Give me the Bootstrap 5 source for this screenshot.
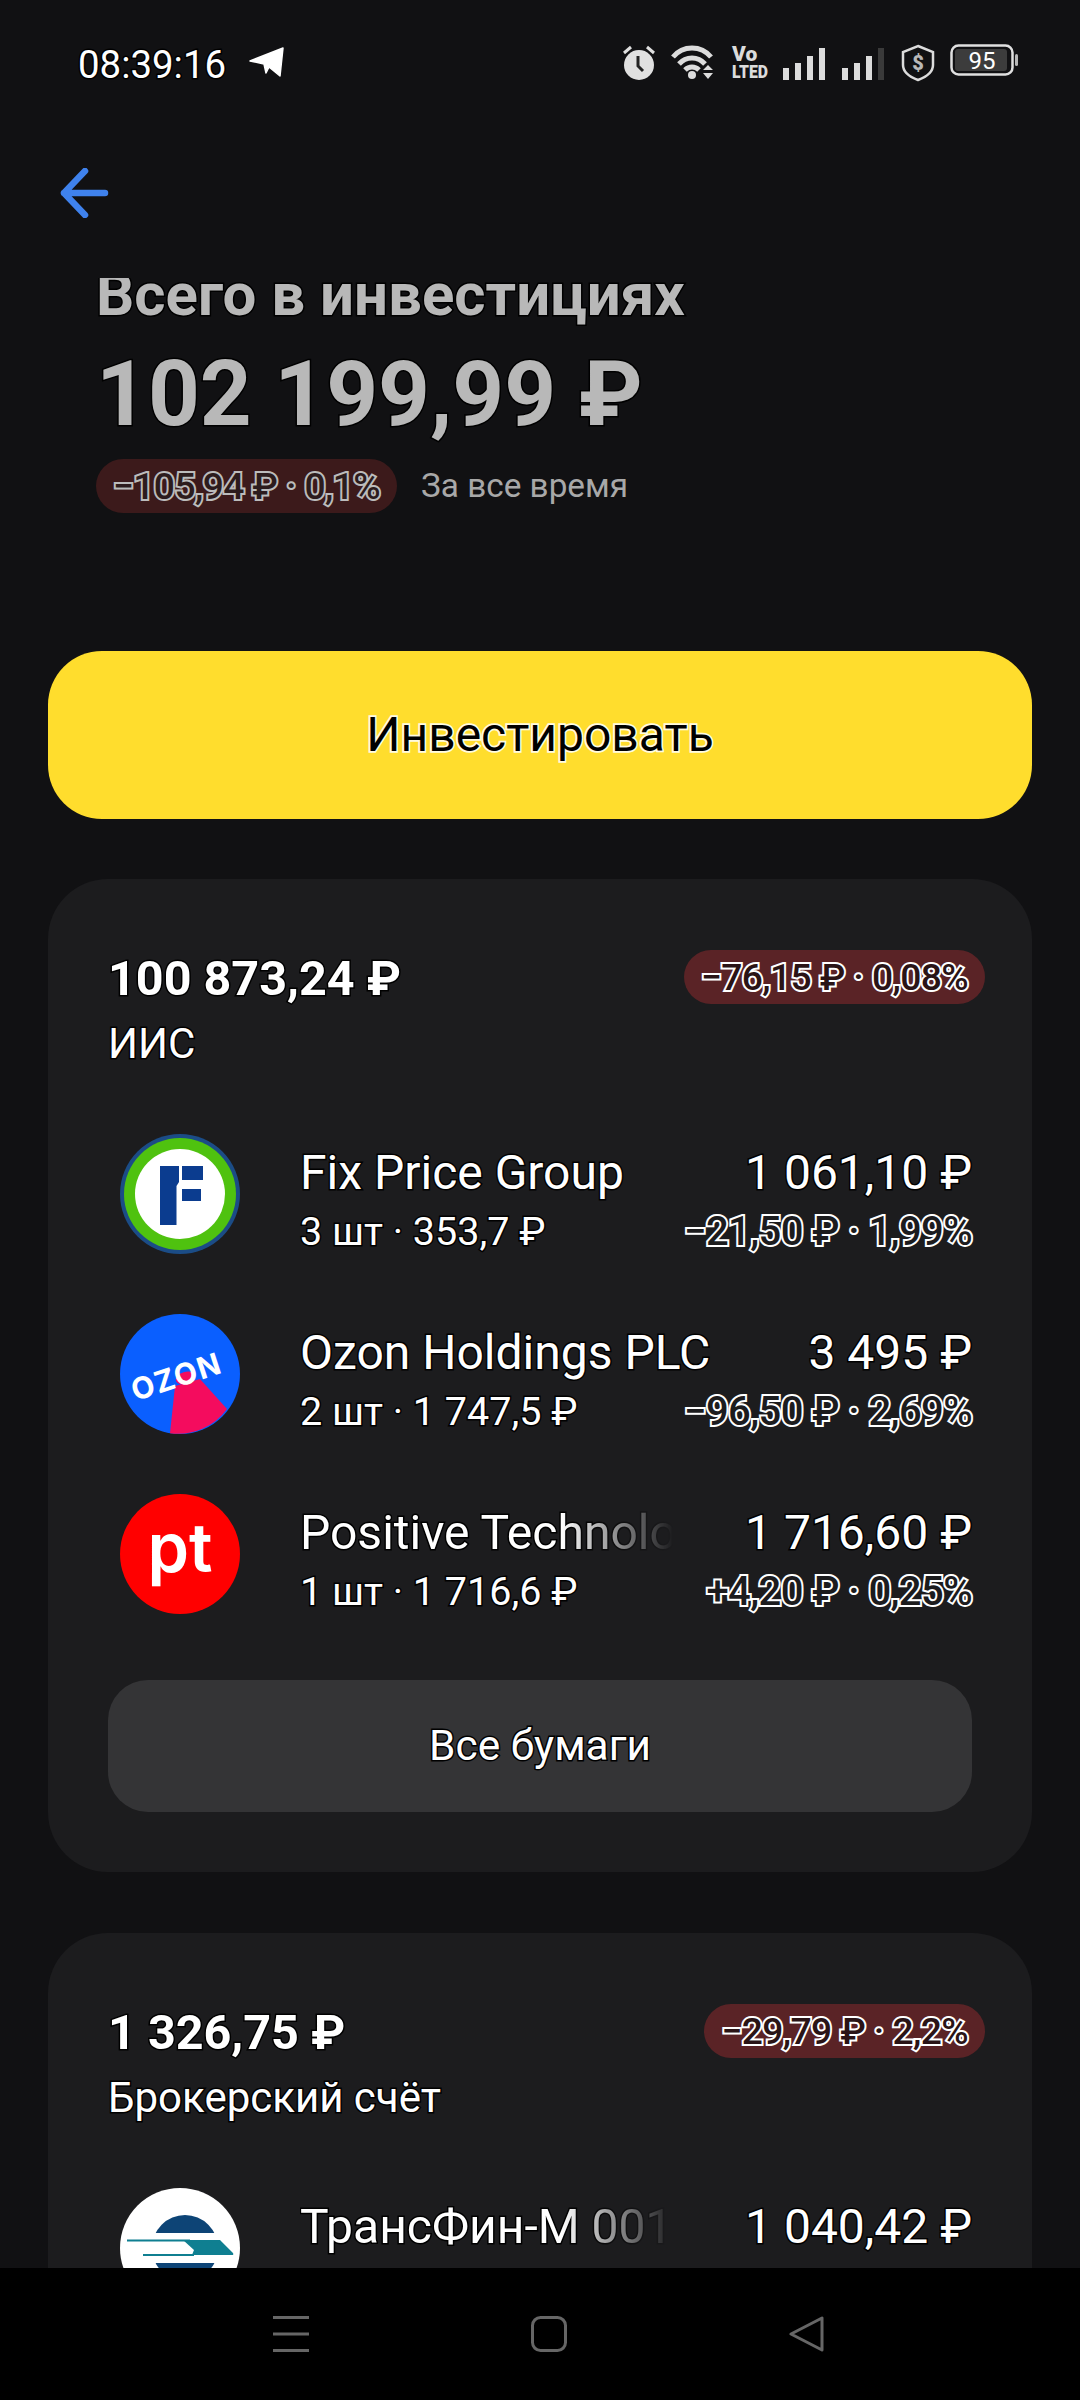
<!DOCTYPE html>
<html lang="ru">
<head>
    <meta charset="UTF-8">
    <meta name="viewport" content="width=device-width, initial-scale=1.0">
    <title>Всего в инвестициях</title>
    <link rel="stylesheet" href="https://cdn.jsdelivr.net/npm/bootstrap@5.3.0/dist/css/bootstrap.min.css">
    <style>
        body { background: #111113; font-family: Roboto, "Liberation Sans", sans-serif; color: #fff; }
        .screen { width: 1080px; height: 2400px; overflow: hidden; }
        .scroll-area { height: 2268px; overflow: hidden; }
        .halo { -webkit-text-stroke: 3px #000; paint-order: stroke fill; }
        .status-row { height: 128px; padding: 43px 62px 0 78px; }
        .status-time { font-size: 38.4px; line-height: 44px; margin-right: 23px; color: #fff; }
        .status-icons { gap: 15px; padding-top: 1px; }
        .status-icons svg { overflow: visible; }
        .back-row { height: 100px; padding: 40px 0 0 58px; }
        .summary { padding: 50px 0 0 96px; height: 423px; }
        .summary-title { font-size: 60px; line-height: 33px; height: 56px; overflow: hidden; font-weight: 700; color: #b8b8b8; margin: 0; white-space: nowrap; }
        .summary-total { font-size: 90.500px; line-height: 104px; font-weight: 700; color: #b8b8b8; margin: 8px 0 13px 0; }
        .summary-note { font-size: 33.300px; color: #a8a8a8; margin-left: 24px; }
        .money-pill { height: 54px; border-radius: 27px; background: #5a2326; padding: 0 17px; font-size: 37.200px; font-weight: 500; line-height: 54px; white-space: nowrap; color: #2a1416; -webkit-text-stroke: 4px #fff; paint-order: stroke fill; letter-spacing: -.6px; }
        .money-pill.dim { background: #3c1a1b; color: #2c1c1d; -webkit-text-stroke-color: #bcbcbc; }
        .invest-btn { display: block; width: 984px; height: 168px; margin: 0 0 60px 48px; border: 0; border-radius: 54px; background: #ffdd2d; font-size: 48px; color: #000; -webkit-text-stroke: 3.5px #fffbe0; paint-order: stroke fill; }
        .invest-btn:hover { background: #ffdd2d; color: #000; }
        .account-box { width: 984px; margin: 0 0 61px 48px; padding: 73px 60px 60px 60px; border: 0; border-radius: 60px; background: #1c1c1e; color: #fff; }
        .account-sum { font-size: 48.500px; line-height: 54px; font-weight: 700; white-space: nowrap; }
        .account-name { font-size: 42px; line-height: 50px; margin-top: 13px; }
        .pill-out { margin-right: -13px; margin-top: -2px; }
        .papers { margin-top: 65px; gap: 60px; }
        .paper-logo { width: 120px; height: 120px; flex: none; margin: 0 60px 0 12px; }
        .paper-text { padding-top: 10px; min-width: 0; }
        .paper-top { font-size: 48px; line-height: 56px; gap: 72px; white-space: nowrap; }
        .paper-name { flex: 1 1 0; min-width: 0; overflow: hidden; }
        .paper-name.faded { -webkit-mask-image: linear-gradient(to right, #000 70%, transparent 100%); mask-image: linear-gradient(to right, #000 70%, transparent 100%); }
        .paper-sub { font-size: 39.500px; line-height: 44px; margin-top: 9px; white-space: nowrap; }
        .paper-change { font-size: 40px; font-weight: 500; color: #1c1c1e; -webkit-text-stroke: 4px #fff; paint-order: stroke fill; letter-spacing: -.6px; }
        .all-btn { display: block; width: 100%; height: 132px; margin-top: 66px; border: 0; border-radius: 40px; background: #343436; font-size: 42.400px; color: #fff; }
        .all-btn:hover { background: #343436; color: #fff; }
        .nav-strip { height: 132px; background: #000; gap: 222px; padding-left: 273px; }
    </style>
</head>
<body class="m-0">
<div class="screen d-flex flex-column">
    <div class="scroll-area flex-shrink-0">
        <!-- status bar -->
        <div class="status-row d-flex align-items-start">
            <span class="status-time halo">08:39:16</span>
            <svg width="36" height="30" viewBox="0 0 36 30" class="mt-1"><path d="M34 1 31 29 20 20 17 26 15 17 1 14Z" fill="#fff" stroke="#fff" stroke-linejoin="round" stroke-width="1.500"/></svg>
            <div class="status-icons d-flex align-items-start ms-auto">
                <svg width="34" height="36" viewBox="0 0 34 36"><circle cx="17" cy="21" r="15" fill="#e0e0e0"/><path d="M2 9 9 3M32 9l-7-6" stroke="#e0e0e0" stroke-width="3"/><path d="M16 12v10l5 5" fill="none" stroke="#222" stroke-width="3"/></svg>
                <svg width="46" height="36" viewBox="0 0 46 36"><path d="M2 13C12 1 30 1 40 13M8 20c7-8 19-8 26 0M14 26c4-4 10-4 14 0" fill="none" stroke="#dcdcdc" stroke-width="5"/><circle cx="21" cy="31" r="4" fill="#dcdcdc"/><path d="M32 26l5-5 5 5ZM32 29l5 6 5-6Z" fill="#dcdcdc"/></svg>
                <svg width="36" height="36" viewBox="0 0 36 36" font-family="Roboto" font-weight="900" fill="#dcdcdc"><text x="0" y="17" font-size="21">Vo</text><text x="0" y="34" font-size="18" textLength="36" lengthAdjust="spacingAndGlyphs">LTED</text></svg>
                <svg width="44" height="32" viewBox="0 0 44 32" class="mt-1" fill="#dcdcdc"><rect x="0" y="20" width="6" height="12"/><rect x="12" y="15" width="6" height="17"/><rect x="24" y="8" width="6" height="24"/><rect x="36" y="0" width="6" height="32"/></svg>
                <svg width="44" height="32" viewBox="0 0 44 32" class="mt-1" fill="#dcdcdc"><rect x="0" y="20" width="6" height="12"/><rect x="12" y="15" width="6" height="17"/><rect x="24" y="8" width="6" height="24"/><rect x="36" y="0" width="6" height="32" fill="#3a3a3a"/></svg>
                <svg width="34" height="38" viewBox="0 0 34 38"><path d="M17 2 32 8v13c0 7-7 12-15 15C9 33 2 28 2 21V8Z" fill="none" stroke="#dcdcdc" stroke-width="2.500"/><text x="17" y="26" font-family="Roboto" font-size="20" font-weight="900" fill="#b8b8b8" text-anchor="middle">$</text></svg>
                <svg width="68" height="32" viewBox="0 0 68 32"><rect x="1.500" y="1.500" width="61" height="29" rx="7" fill="#111113" stroke="#e0e0e0" stroke-width="2.500"/><rect x="5" y="5" width="52" height="22" rx="3" fill="#3c3c3c"/><rect x="65" y="10" width="3" height="12" rx="1.500" fill="#b8b8b8"/><text x="32" y="25" font-family="Roboto" font-size="24" fill="#fff" text-anchor="middle">95</text></svg>
            </div>
        </div>

        <div class="back-row">
            <svg width="54" height="50" viewBox="0 0 54 50"><path d="M47 25H6M27 3 6 25l21 22" fill="none" stroke="#3f82ed" stroke-width="6.500" stroke-linecap="round" stroke-linejoin="round"/></svg>
        </div>

        <!-- summary -->
        <div class="summary">
            <h1 class="summary-title halo">Всего в инвестициях</h1>
            <div class="summary-total halo">102 199,99 ₽</div>
            <div class="d-flex align-items-center">
                <span class="money-pill dim">−105,94 ₽ · 0,1%</span>
                <span class="summary-note">За все время</span>
            </div>
        </div>

        <button class="btn invest-btn" type="button">Инвестировать</button>

        <!-- IIS -->
        <div class="card account-box">
            <div class="d-flex justify-content-between align-items-start">
                <div class="account-sum halo">100 873,24 ₽</div>
                <span class="money-pill pill-out">−76,15 ₽ · 0,08%</span>
            </div>
            <div class="account-name halo">ИИС</div>

            <div class="papers d-flex flex-column">
                <div class="d-flex align-items-center">
                    <svg class="paper-logo" viewBox="0 0 120 120"><circle cx="60" cy="60" r="60" fill="#1b4c86"/><circle cx="60" cy="60" r="56" fill="#4fc20f"/><circle cx="60" cy="60" r="45" fill="#fff"/><path d="M40 32H59V48L56.500 52V91H40Z" fill="#0b3c8f"/><rect x="62" y="32" width="21" height="14" fill="#0b3c8f"/><rect x="62" y="55" width="19" height="12" fill="#0b3c8f"/></svg>
                    <div class="paper-text flex-grow-1">
                        <div class="paper-top d-flex justify-content-between halo"><div class="paper-name">Fix Price Group</div><div>1 061,10 ₽</div></div>
                        <div class="paper-sub d-flex justify-content-between"><div class="halo">3 шт · 353,7 ₽</div><div class="paper-change">−21,50 ₽ · 1,99%</div></div>
                    </div>
                </div>
                <div class="d-flex align-items-center">
                    <svg class="paper-logo" viewBox="0 0 120 120"><circle cx="60" cy="60" r="60" fill="#0a5fff"/><path d="M55 72 50 119.200A60 60 0 0 0 107 95L80 65Z" fill="#f40c5e"/><ellipse cx="65.500" cy="64" rx="10" ry="6" transform="rotate(-18 65.500 64)" fill="#f40c5e"/><text transform="translate(59 73) rotate(-18)" text-anchor="middle" font-family="Inter" font-weight="700" font-size="30" fill="#fff" textLength="92">OZON</text></svg>
                    <div class="paper-text flex-grow-1">
                        <div class="paper-top d-flex justify-content-between halo"><div class="paper-name">Ozon Holdings PLC</div><div>3 495 ₽</div></div>
                        <div class="paper-sub d-flex justify-content-between"><div class="halo">2 шт · 1 747,5 ₽</div><div class="paper-change">−96,50 ₽ · 2,69%</div></div>
                    </div>
                </div>
                <div class="d-flex align-items-center">
                    <svg class="paper-logo" viewBox="0 0 120 120"><circle cx="60" cy="60" r="60" fill="#ff0000"/><text x="60" y="78" text-anchor="middle" font-family="Inter" font-weight="600" font-size="68" fill="#fff" textLength="65" lengthAdjust="spacingAndGlyphs">pt</text></svg>
                    <div class="paper-text flex-grow-1">
                        <div class="paper-top d-flex justify-content-between halo"><div class="paper-name faded">Positive Technologies</div><div>1 716,60 ₽</div></div>
                        <div class="paper-sub d-flex justify-content-between"><div class="halo">1 шт · 1 716,6 ₽</div><div class="paper-change">+4,20 ₽ · 0,25%</div></div>
                    </div>
                </div>
            </div>

            <button class="btn all-btn" type="button"><span class="halo">Все бумаги</span></button>
        </div>

        <!-- broker -->
        <div class="card account-box">
            <div class="d-flex justify-content-between align-items-start">
                <div class="account-sum halo">1 326,75 ₽</div>
                <span class="money-pill pill-out">−29,79 ₽ · 2,2%</span>
            </div>
            <div class="account-name halo">Брокерский счёт</div>

            <div class="papers d-flex flex-column">
                <div class="d-flex align-items-center">
                    <svg class="paper-logo" viewBox="0 0 120 120"><circle cx="60" cy="60" r="60" fill="#fff"/><circle cx="65" cy="60" r="33" fill="#0d4476"/><rect x="28" y="45" width="75" height="30" fill="#fff"/><path d="M63 52H100L113 65Q114 67 112 67H72L74 62Z" fill="#0f7f91"/><path d="M7 52.500H70M23 67H74" stroke="#0f7f91" stroke-width="2"/></svg>
                    <div class="paper-text flex-grow-1">
                        <div class="paper-top d-flex justify-content-between halo"><div class="paper-name faded">ТрансФин-М 001</div><div>1 040,42 ₽</div></div>
                        <div class="paper-sub">&nbsp;</div>
                    </div>
                </div>
            </div>
        </div>
    </div>

    <!-- system nav -->
    <div class="nav-strip d-flex align-items-center flex-shrink-0">
        <svg width="36" height="36" viewBox="0 0 36 36"><path d="M0 1.500H36M0 18H36M0 34.500H36" stroke="#666" stroke-width="3"/></svg>
        <svg width="36" height="36" viewBox="0 0 36 36"><rect x="1.500" y="1.500" width="33" height="33" rx="8" fill="none" stroke="#666" stroke-width="3"/></svg>
        <svg width="36" height="36" viewBox="0 0 36 36"><path d="M33 2V34L2 18Z" fill="none" stroke="#666" stroke-width="3" stroke-linejoin="round"/></svg>
    </div>
</div>
<script src="https://cdn.jsdelivr.net/npm/bootstrap@5.3.0/dist/js/bootstrap.bundle.min.js"></script>
</body>
</html>
